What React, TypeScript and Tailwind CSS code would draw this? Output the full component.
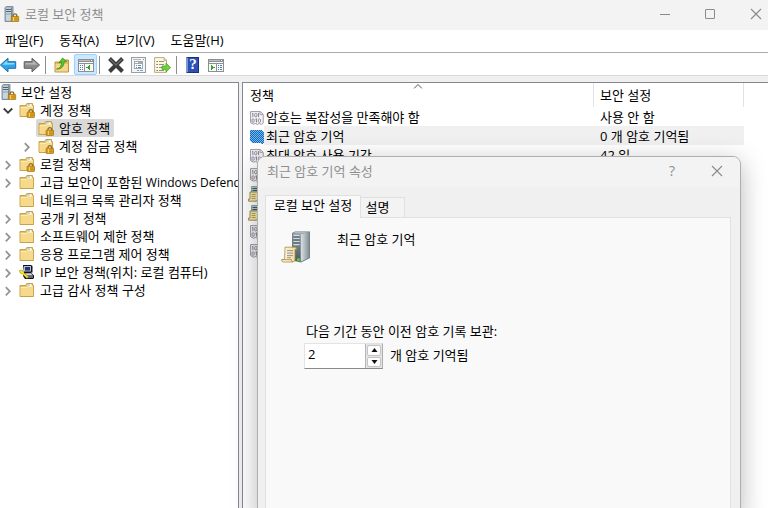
import { useState } from "react";

const font = "font-['Open_Sans','Noto_Sans_CJK_KR',sans-serif]";

function Padlock({ x, y }: { x: number; y: number }) {
  return (
    <g transform={`translate(${x} ${y})`}>
      <path d="M2.2 4V2.6a1.8 1.8 0 0 1 3.6 0V4" fill="none" stroke="#8a6a2c" strokeWidth="1.3" />
      <rect x="0.3" y="3.4" width="7.4" height="5.2" rx="0.5" fill="#e6a81f" stroke="#9a6a10" strokeWidth="0.7" />
      <path d="M1 5.2h6M1 6.9h6" stroke="#b57d12" strokeWidth="0.7" />
      <path d="M2.6 4v4" stroke="#f8d774" strokeWidth="1" />
    </g>
  );
}

function ServerLock() {
  return (
    <svg viewBox="0 0 16 16" className="size-4 shrink-0" aria-hidden="true">
      <path d="M1 1.5 2.5.5h6.5v14l-1.5 1H1z" fill="#a9bac6" stroke="#6d7f8c" strokeWidth="0.8" />
      <path d="M2 2.5h5v12H2z" fill="#c9d6de" />
      <path d="M2 3.5h5M2 5.5h5" stroke="#4f6472" strokeWidth="1" />
      <path d="M2 8h5" stroke="#8ea0ac" strokeWidth="1" />
      <path d="M7.6 1.5v13" stroke="#71838f" />
      <Padlock x={7} y={7} />
    </svg>
  );
}

function Folder({ locked = false }: { locked?: boolean }) {
  return (
    <svg viewBox="0 0 16 16" className="size-4 shrink-0" aria-hidden="true">
      <path d="M1 3.5h5.5l1.3-2h5.7v2h1v11H1z" fill="#e6c26a" stroke="#c39a40" strokeWidth="0.9" />
      <path d="M8.4 2.3h4.3v1.8H8z" fill="#fffdf2" />
      <path d="M8.5 3h2.2" stroke="#5aa4d8" strokeWidth="0.9" />
      <path d="M1.5 5h6l1-1h5.6v10H1.5z" fill="#f6d98a" />
      <path d="M2 5.5h5.8l1-1h4.8" fill="none" stroke="#fff1c2" strokeWidth="0.8" />
      {locked && <Padlock x={7.8} y={6.8} />}
    </svg>
  );
}

function IpComputer() {
  return (
    <svg viewBox="0 0 16 16" className="size-4 shrink-0" aria-hidden="true">
      <path d="M4 1h8l1.500 1v6.500H12l3 3V14l-1 1H6l-2-3 1-3.500z" fill="#111" />
      <path d="M5 2h7v5.5H5z" fill="#b9bfd0" />
      <path d="M6 3h5v3.6H6z" fill="#27357c" />
      <path d="M6 9.2h6l2 2.3H7z" fill="#d5d8e2" />
      <path d="M7 12.3h7v1.4H7.6z" fill="#8087ad" />
      <path d="M.5 6.5 3.2 6l1.2 2.2 5 4.6-1.3 1.6-5-4.7-2-.6z" fill="#ffeb1c" stroke="#8d7a00" strokeWidth="0.5" />
    </svg>
  );
}

function PolicyIcon() {
  return (
    <svg viewBox="0 0 14 14" className="h-3.5 w-3.5" aria-hidden="true">
      <path d="M.6.6h9.7l2.9 2.7v8.8l-1.5 1.3-2.2-.9-2 .9-2.2-.9-1.9.7L.6 11.6z" fill="#f6f5f8" stroke="#9a97a2" strokeWidth="1" />
      <path d="M10 .8v2.8h2.9" fill="none" stroke="#9a97a2" strokeWidth="0.9" />
      <path d="M2.9 2.2v4M8.6 2.2v4M6.4 7.6v4M2 2.9l.9-.5M5.5 8.3l.9-.5M7.8 2.9l.8-.5" stroke="#857f8f" strokeWidth="1" />
      <rect x="4.7" y="2.5" width="2.2" height="3.4" rx="0.9" fill="none" stroke="#857f8f" strokeWidth="0.9" />
      <rect x="2" y="7.9" width="2.2" height="3.4" rx="0.9" fill="none" stroke="#857f8f" strokeWidth="0.9" />
      <rect x="8.3" y="7.9" width="2.2" height="3.4" rx="0.9" fill="none" stroke="#857f8f" strokeWidth="0.9" />
    </svg>
  );
}

function SelectedPolicyIcon() {
  return (
    <svg viewBox="0 0 14 14" className="h-3.5 w-3.5" aria-hidden="true" shapeRendering="crispEdges">
      <defs>
        <pattern id="checker" width="2" height="2" patternUnits="userSpaceOnUse">
          <rect width="2" height="2" fill="#0a6cc4" />
          <rect width="1" height="1" fill="#7db4e2" />
          <rect x="1" y="1" width="1" height="1" fill="#7db4e2" />
        </pattern>
      </defs>
      <path d="M0 0h11l3 3v10l-2 1-3-1H3l-3-2z" fill="url(#checker)" />
    </svg>
  );
}

function ServerScrollSmall() {
  return (
    <svg viewBox="0 0 16 16" className="-ml-0.5 h-4 w-4 shrink-0" aria-hidden="true">
      <path d="M3.5.5h9v13h-9z" fill="#b7c8ca" stroke="#7d9195" strokeWidth="0.8" />
      <path d="M4.5 2.5h5M4.5 4.5h5" stroke="#2f6066" />
      <path d="M2 6h7.5v7.5l-1 1.7H.6V13H2z" fill="#f8e9ac" stroke="#8c7638" strokeWidth="0.8" />
      <path d="M3.5 8.5h4M3.5 10.5h4M3.5 12.5h4" stroke="#a98f48" strokeWidth="0.8" />
      <path d="M10 12h1.5" stroke="#4cc33a" />
    </svg>
  );
}

function ServerScroll() {
  return (
    <svg viewBox="0 0 32 32" className="size-8 shrink-0" aria-hidden="true">
      <defs>
        <linearGradient id="side" x1="0" x2="1">
          <stop offset="0" stopColor="#dfe5e7" />
          <stop offset="1" stopColor="#7d8b91" />
        </linearGradient>
        <linearGradient id="front" x1="0" x2="0" y1="0" y2="1">
          <stop offset="0" stopColor="#8c9ca3" />
          <stop offset="1" stopColor="#4a5960" />
        </linearGradient>
        <linearGradient id="paper" x1="0" x2="1">
          <stop offset="0" stopColor="#fffbe8" />
          <stop offset="1" stopColor="#efd894" />
        </linearGradient>
      </defs>
      <path d="M11 2 14 .6h15L29 27l-9 4.4-9-2z" fill="#65747b" />
      <path d="M19.5 3 28.6 1v25.6l-9.1 4.2z" fill="url(#side)" />
      <path d="M11.5 2.3h8v28l-8-1.6z" fill="url(#front)" />
      <path d="M11.5 2.3 14 1h14.5l-9 1.7z" fill="#aebbc0" />
      <path d="M12.5 4.5h6M12.5 7.5h6M12.5 10.5h6M12.5 13.5h6" stroke="#d4dee1" strokeWidth="1.4" />
      <path d="M12.5 6h6M12.5 9h6M12.5 12h6" stroke="#35454d" strokeWidth="0.8" />
      <rect x="16" y="27.4" width="2.8" height="2.4" fill="#4be01a" />
      <path d="M4 16.2h10.2q1.6.2 1.6 2H14v10.2q-.2 2.6-2.4 2.6H2.2Q.6 30.8.6 28.6h3z" fill="url(#paper)" stroke="#a98b4a" strokeWidth="0.8" />
      <path d="M.8 28.6h9.5q.2 2.2 1.5 2.3" fill="none" stroke="#a98b4a" strokeWidth="0.8" />
      <path d="M6 19.6h6M6 22.1h6M6 24.6h6M6 26.8h4" stroke="#8b8794" strokeWidth="0.9" />
    </svg>
  );
}

function Arrow({ back = false }: { back?: boolean }) {
  return (
    <svg viewBox="0 0 17 16" className="h-4 w-[17px]" aria-hidden="true">
      {back ? (
        <>
          <path d="M.4 8 8 1.2V4.7h7.7v6.6H8v3.5z" fill="#2fa4e8" stroke="#1a6fae" strokeWidth="1" />
          <path d="M2.4 7.7 7.2 3.5V6h7.2v1.6z" fill="#8fd6fb" />
        </>
      ) : (
        <>
          <path d="M16.6 8 9 1.2V4.7H1.2v6.6H9v3.5z" fill="#8b8b8b" stroke="#5f5f5f" strokeWidth="1" />
          <path d="M14.6 7.7 9.8 3.5V6H2.4v1.6z" fill="#b5b5b5" />
        </>
      )}
    </svg>
  );
}

function UpFolder() {
  return (
    <svg viewBox="0 0 16 16" className="size-4" aria-hidden="true">
      <path d="M1 5h5.500l1.500-2h6.500v12H1z" fill="#e4bc62" stroke="#b58d38" strokeWidth="0.9" />
      <path d="M1.600 7h12.300v7.400H1.600z" fill="#f6d68a" />
      <path d="M2.500 12C6 11.500 7.600 9 7.600 5.200L4.800 6 8.600 1 12.600 4.600 10 5C10 9.500 7 12.600 2.500 12z" fill="#56c92c" stroke="#2b8d18" strokeWidth="0.7" />
    </svg>
  );
}

function PaneIcon({ action = false }: { action?: boolean }) {
  return (
    <svg viewBox="0 0 16 16" className="size-4" aria-hidden="true" shapeRendering="crispEdges">
      <path d="M0 2h16v13H0z" fill="#8b9094" />
      <path d="M1 5h14v1H1zM1 7h14v7H1z" fill="#fafafa" />
      <path d="M1 3h11v1H1z" fill="#b9bec2" />
      <path d="M13 3h1v1h-1z" fill="#fff" />
      {action ? (
        <>
          <path d="M8 7h1v7H8z" fill="#8b9094" />
          <path d="M3 8v5l4-2.5z" fill="#31a51f" />
          <path d="M10 8h1v1h-1zM10 10h1v1h-1zM10 12h1v1h-1zM12 8h2v1h-2zM12 10h2v1h-2zM12 12h2v1h-2z" fill="#4a7ea8" />
        </>
      ) : (
        <>
          <path d="M6 7h1v7H6z" fill="#8b9094" />
          <path d="M12 8v5L8 10.5z" fill="#31a51f" />
          <path d="M2 8h1v1H2zM2 10h1v1H2zM2 12h1v1H2zM4 8h1v1H4zM4 10h1v1H4zM4 12h1v1H4z" fill="#4a7ea8" />
        </>
      )}
    </svg>
  );
}

function DeleteIcon() {
  return (
    <svg viewBox="0 0 16 16" className="size-4" aria-hidden="true">
      <path d="M1.5 1.5 14.5 14.5M14.5 1.5 1.5 14.5" stroke="#3c3c3c" strokeWidth="4" />
      <path d="M2.2 2.2 8 8l5.8-5.8" fill="none" stroke="#6c6c6c" strokeWidth="1.2" />
    </svg>
  );
}

function PropertiesIcon() {
  return (
    <svg viewBox="0 0 16 16" className="size-4" aria-hidden="true" shapeRendering="crispEdges">
      <path d="M0 0h15v16H0z" fill="#9a9ea2" />
      <path d="M1 1h13v14H1z" fill="#f4f5f6" />
      <path d="M2 2h8v1H2z" fill="#b3b7bb" />
      <path d="M12 2h1v1h-1z" fill="#8c9196" />
      <path d="M3 4h9v8H3z" fill="#a3a8ac" />
      <path d="M4 5h3v1H4zM4 7h7v4H4z" fill="#fff" />
      <path d="M5 8h1v1H5zM5 10h1v1H5zM7 8h3v1H7zM7 10h3v1H7z" fill="#5c8db5" />
      <path d="M6 13h2v1H6zM9 13h3v1H9z" fill="#5ea6d6" />
    </svg>
  );
}

function ExportIcon() {
  return (
    <svg viewBox="0 0 17 16" className="h-4 w-[17px]" aria-hidden="true">
      <path d="M.6.6H10l2.5 2.6V15.4H.6z" fill="#fff8dd" stroke="#b3a274" strokeWidth="0.9" />
      <path d="M10 .6v2.8h2.5" fill="#eee0b0" stroke="#b3a274" strokeWidth="0.8" />
      <path d="M5 4.5h5M5 7.5h5M5 10.5h3M5 13.500h5" stroke="#8f8f98" />
      <path d="M2.5 4.5h1.2M2.5 7.5h1.2M2.5 10.5h1.2M2.5 13.500h1.2" stroke="#55555f" />
      <path d="M8 9h4V6.2l4.6 4.4-4.6 4.400V12.400H8z" fill="#6ed63c" stroke="#3d9a22" strokeWidth="0.7" />
    </svg>
  );
}

function HelpIcon() {
  return (
    <span className="flex h-4 w-[13px] items-center justify-center border border-l-2 border-[#16337f] border-l-[#7f95cf] bg-[#2c50b4] font-['Liberation_Serif',serif] text-[15px] leading-none font-bold text-white">
      ?
    </span>
  );
}

function CloseGlyph() {
  return (
    <svg viewBox="0 0 12 12" className="size-3" aria-hidden="true">
      <path d="M1 1l10 10M11 1 1 11" stroke="#8a8a8a" strokeWidth="1.1" />
    </svg>
  );
}

function Chevron({ open = false }: { open?: boolean }) {
  return (
    <svg viewBox="0 0 10 10" className="size-2.5" aria-hidden="true">
      {open ? (
        <path d="M.8 2.5 5 6.7 9.2 2.5" fill="none" stroke="#3c3c3c" strokeWidth="1.8" />
      ) : (
        <path d="M2.8 1.2 6.8 5.3 2.8 9.400" fill="none" stroke="#959595" strokeWidth="1.8" />
      )}
    </svg>
  );
}

type Node = {
  label: string;
  product?: string;
  level: 1 | 2;
  icon: "locked" | "folder" | "ip";
  expand: "open" | "closed" | "none";
  selected?: boolean;
};

const nodes: Node[] = [
  { label: "계정 정책", level: 1, icon: "locked", expand: "open" },
  { label: "암호 정책", level: 2, icon: "locked", expand: "none", selected: true },
  { label: "계정 잠금 정책", level: 2, icon: "locked", expand: "closed" },
  { label: "로컬 정책", level: 1, icon: "locked", expand: "closed" },
  { label: "고급 보안이 포함된 ", product: "Windows Defender", level: 1, icon: "folder", expand: "closed" },
  { label: "네트워크 목록 관리자 정책", level: 1, icon: "folder", expand: "none" },
  { label: "공개 키 정책", level: 1, icon: "folder", expand: "closed" },
  { label: "소프트웨어 제한 정책", level: 1, icon: "folder", expand: "closed" },
  { label: "응용 프로그램 제어 정책", level: 1, icon: "folder", expand: "closed" },
  { label: "IP 보안 정책(위치: 로컬 컴퓨터)", level: 1, icon: "ip", expand: "closed" },
  { label: "고급 감사 정책 구성", level: 1, icon: "folder", expand: "closed" },
];

function Tree() {
  return (
    <nav aria-label="보안 설정" className="w-[239px] shrink-0 overflow-hidden border-t border-r border-[#828790] bg-white">
      <ul className="whitespace-nowrap">
        <li className="flex h-[18px] items-center gap-1 pl-px">
          <ServerLock />
          <span>보안 설정</span>
        </li>
        {nodes.map((n) => (
          <li key={n.label} className={`flex h-[18px] items-center ${n.level === 2 ? "pl-[22px]" : "pl-[3px]"}`}>
            <span className="flex w-[14px] shrink-0 pt-0.5">
              {n.expand !== "none" && (
                <button type="button" aria-label={n.label} aria-expanded={n.expand === "open"}>
                  <Chevron open={n.expand === "open"} />
                </button>
              )}
            </span>
            <span className={`flex h-[18px] items-center gap-[5px] rounded-xs pr-1 pl-0.5 ${n.selected ? "bg-[#d9d9d9]" : ""}`}>
              {n.icon === "ip" ? <IpComputer /> : <Folder locked={n.icon === "locked"} />}
              <span>
                {n.label}
                {n.product && <span className="text-xs">{n.product}</span>}
              </span>
            </span>
          </li>
        ))}
      </ul>
    </nav>
  );
}

type Policy = { name: string; value: string; icon: "policy" | "selected" | "server" };

const policies: Policy[] = [
  { name: "암호는 복잡성을 만족해야 함", value: "사용 안 함", icon: "policy" },
  { name: "최근 암호 기억", value: "0 개 암호 기억됨", icon: "selected" },
  { name: "최대 암호 사용 기간", value: "42 일", icon: "policy" },
  { name: "", value: "", icon: "policy" },
  { name: "", value: "", icon: "server" },
  { name: "", value: "", icon: "server" },
  { name: "", value: "", icon: "policy" },
  { name: "", value: "", icon: "policy" },
];

function PolicyList() {
  return (
    <main className="min-w-0 flex-1 overflow-hidden border-t border-l border-[#828790] bg-white">
      <table className="w-[501px] table-fixed border-separate border-spacing-0 text-left whitespace-nowrap">
        <colgroup>
          <col className="w-[351px]" />
          <col className="w-[150px]" />
        </colgroup>
        <thead>
          <tr className="h-6">
            <th className="relative h-6 border-r border-[#e2e2e2] p-0 pl-[7px] font-normal">
              정책
              <svg viewBox="0 0 9 5" className="absolute top-px left-1/2 h-[5px] w-[9px] -translate-x-1/2" aria-hidden="true">
                <path d="M.5 4.5l4-4 4 4" fill="none" stroke="#555" />
              </svg>
            </th>
            <th className="h-6 border-r border-[#e2e2e2] p-0 pl-1.5 font-normal">보안 설정</th>
          </tr>
        </thead>
        <tbody>
          {policies.map((p, i) => (
            <tr key={i} className="h-[19px]">
              <td className="p-0 pl-[7px]">
                <span className="flex h-[19px] items-center">
                  <span className="flex w-3.5 shrink-0 pt-0.5">
                    {p.icon === "policy" && <PolicyIcon />}
                    {p.icon === "selected" && <SelectedPolicyIcon />}
                    {p.icon === "server" && <ServerScrollSmall />}
                  </span>
                  {p.name && (
                    <span className={`flex h-[19px] flex-1 items-center pl-0.5 ${p.icon === "selected" ? "bg-[#f0f0f0]" : ""}`}>
                      {p.name}
                    </span>
                  )}
                </span>
              </td>
              <td className={`p-0 pl-1.5 ${p.icon === "selected" ? "bg-[#f0f0f0]" : ""}`}>{p.value}</td>
            </tr>
          ))}
        </tbody>
      </table>
    </main>
  );
}

function PropertiesDialog() {
  const [count, setCount] = useState("2");
  const step = (d: number) => setCount(String(Math.max(0, Number(count) + d)));
  return (
    <section
      role="dialog"
      aria-labelledby="dialog-title"
      className="absolute top-[156px] right-[27px] -bottom-3 left-[257px] flex flex-col overflow-hidden rounded-lg border border-[#aeaeae] bg-[#f0f0f0] shadow-[0_6px_26px_rgba(0,0,0,0.28)]"
    >
      <header className="flex h-[30px] items-center bg-[#f3f3f3] pr-[17px] pb-0.5 pl-[9px] text-[#8f8f8f]">
        <h2 id="dialog-title" className="flex-1">최근 암호 기억 속성</h2>
        <button type="button" aria-label="도움말" className="mr-[33px] w-3 text-[14px]">?</button>
        <button type="button" aria-label="닫기"><CloseGlyph /></button>
      </header>
      <div className="flex flex-1 flex-col px-[7px] pt-2 pr-[9px]">
        <div role="tablist" className="z-10 -mb-px flex items-end">
          <button type="button" role="tab" aria-selected="true" className="h-[23px] w-24 border border-b-0 border-[#e0e0e0] bg-[#f9f9f9] pb-1">
            로컬 보안 설정
          </button>
          <button type="button" role="tab" aria-selected="false" className="h-[21px] w-11 border border-l-0 border-[#e0e0e0] bg-[#f3f3f3] pr-2.5 pb-0.5">
            설명
          </button>
        </div>
        <div role="tabpanel" className="flex-1 border border-[#e0e0e0] bg-[#f9f9f9] pt-[13px] pl-[15px]">
          <div className="flex gap-6">
            <ServerScroll />
            <p className="leading-4">최근 암호 기억</p>
          </div>
          <div className="mt-[58px] pl-[23px]">
            <label htmlFor="count" className="block h-[22px] pl-0.5 leading-5">
              다음 기간 동안 이전 암호 기록 보관:
            </label>
            <div className="flex items-center gap-[7px]">
              <div className="flex h-[26px] w-[79px] border border-t-[#e3e3e3] border-r-[#acacac] border-b-[#8a8a8a] border-l-[#e3e3e3] bg-white">
                <input
                  id="count"
                  value={count}
                  onChange={(e) => setCount(e.target.value)}
                  className="min-w-0 flex-1 pb-1 pl-[3px] outline-none"
                />
                <div className="flex w-[17px] flex-col border-l border-[#b5b5b5] bg-[#e4e4e4]">
                  <button type="button" aria-label="늘리기" onClick={() => step(1)} className="m-px mb-0 flex flex-1 items-center justify-center rounded-xs border border-[#c4c4c4] bg-[#fdfdfd]">
                    <svg viewBox="0 0 7 4" className="h-1 w-[7px]" aria-hidden="true"><path d="M3.5 0 6.500 4h-6z" fill="#111" /></svg>
                  </button>
                  <button type="button" aria-label="줄이기" onClick={() => step(-1)} className="m-px flex flex-1 items-center justify-center rounded-xs border border-[#c4c4c4] bg-[#fdfdfd]">
                    <svg viewBox="0 0 7 4" className="h-1 w-[7px]" aria-hidden="true"><path d="M.5 0h6l-3 4z" fill="#111" /></svg>
                  </button>
                </div>
              </div>
              <span className="pb-0.5">개 암호 기억됨</span>
            </div>
          </div>
        </div>
      </div>
    </section>
  );
}

function Separator() {
  return <span className="h-[18px] w-px shrink-0 bg-[#8d8d8d]" />;
}

export default function App() {
  return (
    <div className={`relative flex h-screen flex-col overflow-hidden bg-[#f0f0f0] text-[13px] leading-[18px] text-black ${font}`}>
      <header className="flex h-[30px] shrink-0 items-center bg-[#f3f3f3] pr-1.5 pb-0.5 pl-1">
        <ServerLock />
        <h1 className="flex-1 pl-[5px] text-[#8f8f8f]">로컬 보안 정책</h1>
        <div className="flex items-center gap-[35px]">
          <button type="button" aria-label="최소화" className="flex">
            <span className="h-px w-2.5 bg-[#8a8a8a]" />
          </button>
          <button type="button" aria-label="최대화" className="flex">
            <span className="size-2.5 rounded-[1px] border border-[#8a8a8a]" />
          </button>
          <button type="button" aria-label="닫기"><CloseGlyph /></button>
        </div>
      </header>
      <div role="menubar" className="flex h-[23px] shrink-0 items-center gap-4 border-b border-[#ababab] bg-white pb-0.5 pl-[5px]">
        <button type="button" role="menuitem">파일(F)</button>
        <button type="button" role="menuitem">동작(A)</button>
        <button type="button" role="menuitem">보기(V)</button>
        <button type="button" role="menuitem">도움말(H)</button>
      </div>
      <div role="toolbar" aria-label="도구 모음" className="flex h-[23px] shrink-0 items-center border-b border-[#d9d9d9] bg-white pt-px">
        <button type="button" aria-label="뒤로"><Arrow back /></button>
        <button type="button" aria-label="앞으로" className="mr-[5px] ml-1.5"><Arrow /></button>
        <Separator />
        <button type="button" aria-label="한 수준 위로" className="mr-1 ml-2"><UpFolder /></button>
        <button type="button" aria-label="콘솔 트리 표시" aria-pressed="true" className="mr-0.5 flex h-[21px] w-[23px] items-center justify-center rounded-xs border border-[#99d1ff] bg-[#cce8ff]">
          <PaneIcon />
        </button>
        <Separator />
        <button type="button" aria-label="삭제" className="ml-2"><DeleteIcon /></button>
        <button type="button" aria-label="속성" className="mx-[7px]"><PropertiesIcon /></button>
        <button type="button" aria-label="목록 내보내기" className="mr-[5px]"><ExportIcon /></button>
        <Separator />
        <button type="button" aria-label="도움말" className="mr-[9px] ml-[9px]"><HelpIcon /></button>
        <button type="button" aria-label="작업 창 표시"><PaneIcon action /></button>
      </div>
      <div className="flex min-h-0 flex-1 gap-[3px] pt-1.5">
        <Tree />
        <PolicyList />
      </div>
      <PropertiesDialog />
    </div>
  );
}
